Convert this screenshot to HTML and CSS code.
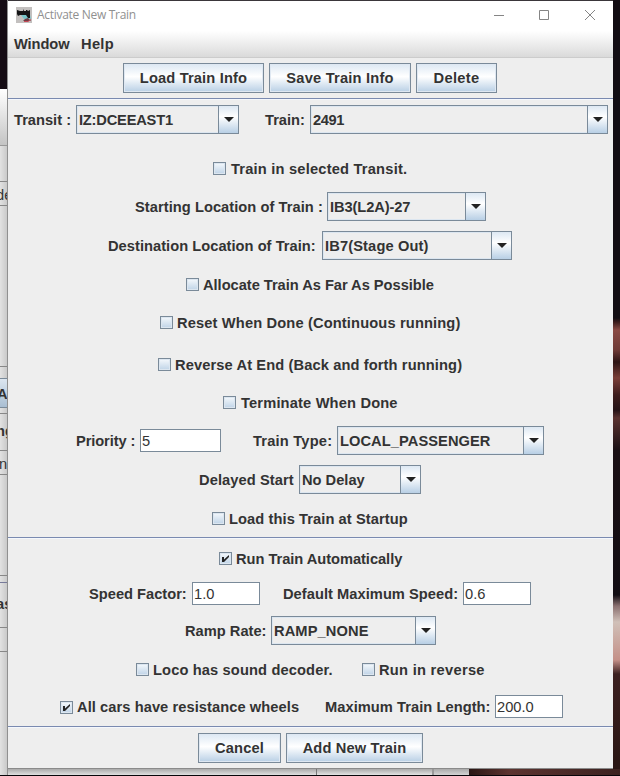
FILE: index.html
```
<!DOCTYPE html>
<html lang="en">
<head>
<meta charset="utf-8">
<title>Activate New Train</title>
<link rel="stylesheet" href="styles.css">
</head>
<body>
<div class="desktop">
  <div class="behind-left">
    <div class="bl bl-dark"></div>
    <div class="bl bl-head"></div>
    <div class="bl bl-a"></div>
    <div class="bl bl-field">de</div>
    <div class="bl bl-b"></div>
    <div class="bl bl-gap"></div>
    <div class="bl bl-button">A</div>
    <div class="bl bl-gap2"></div>
    <div class="bl bl-title">ng</div>
    <div class="bl bl-cell">n</div>
    <div class="bl bl-c"></div>
    <div class="bl bl-gap3"></div>
    <div class="bl bl-title2">as</div>
    <div class="bl bl-cell2"></div>
    <div class="bl bl-d"></div>
  </div>
  <main class="window">
    <header class="titlebar">
      <svg class="app-icon" width="16" height="16" viewBox="0 0 16 16">
        <rect width="16" height="16" fill="#c3c0bf"/>
        <path d="M5 8h9l1 4H8z" fill="#76c4c9"/>
        <path d="M1 3l3 1h3V2l1 2h2V3h1l1 1 2-1v8h-2l-2-3H4L2 9 1 7z" fill="#141416"/>
        <path d="M9 12l3-1 3 3H7z" fill="#6d3c45"/>
        <path d="M8 14.500h4l3-2" stroke="#c84a58" fill="none"/>
      </svg>
      <span class="caption">Activate New Train</span>
      <svg class="controls" width="104" height="12" viewBox="0 0 104 12" fill="none" stroke="#858585">
        <path d="M1 6.500h10M46.500 1.500h9v9h-9zM92 1l10 10M102 1L92 11"/>
      </svg>
    </header>
    <nav class="menubar"><span class="m-window">Window</span><span class="m-help">Help</span></nav>
    <div class="buttons top">
      <button class="w141">Load Train Info</button><button class="w142">Save Train Info</button><button class="w81">Delete</button>
    </div>
    <hr>
    <section>
      <div class="row r-transit"><label class="l-transit">Transit :</label><div class="combo c-transit"><span>IZ:DCEEAST1</span><i></i></div><label class="l-train">Train:</label><div class="combo c-train"><span>2491</span><i></i></div></div>
      <div class="row r-selected"><b class="check"></b><span class="t-selected">Train in selected Transit.</span></div>
      <div class="row r-start"><label class="l-start">Starting Location of Train :</label><div class="combo c-start"><span>IB3(L2A)-27</span><i></i></div></div>
      <div class="row r-dest"><label class="l-dest">Destination Location of Train:</label><div class="combo c-dest"><span>IB7(Stage Out)</span><i></i></div></div>
      <div class="row r-alloc"><b class="check"></b><span class="t-alloc">Allocate Train As Far As Possible</span></div>
      <div class="row r-reset"><b class="check"></b><span class="t-reset">Reset When Done (Continuous running)</span></div>
      <div class="row r-reverse"><b class="check"></b><span class="t-reverse">Reverse At End (Back and forth running)</span></div>
      <div class="row r-term"><b class="check"></b><span class="t-term">Terminate When Done</span></div>
      <div class="row r-priority"><label class="l-priority">Priority :</label><div class="field f-priority">5</div><label class="l-type">Train Type:</label><div class="combo c-type"><span>LOCAL_PASSENGER</span><i></i></div></div>
      <div class="row r-delay"><label class="l-delay">Delayed Start</label><div class="combo c-delay"><span>No Delay</span><i></i></div></div>
      <div class="row r-load"><b class="check"></b><span class="t-load">Load this Train at Startup</span></div>
    </section>
    <hr>
    <section>
      <div class="row r-auto"><b class="check on"><svg width="13" height="13" viewBox="0 0 13 13"><path d="M3 5h2v2.500L10 3v2L5 10H3z" fill="#222"/></svg></b><span class="t-auto">Run Train Automatically</span></div>
      <div class="row r-speed"><label class="l-speed">Speed Factor:</label><div class="field">1.0</div><label class="l-max">Default Maximum Speed:</label><div class="field">0.6</div></div>
      <div class="row r-ramp"><label class="l-ramp">Ramp Rate:</label><div class="combo c-ramp"><span>RAMP_NONE</span><i></i></div></div>
      <div class="row r-loco"><b class="check"></b><span class="t-loco">Loco has sound decoder.</span><b class="check"></b><span class="t-rev">Run in reverse</span></div>
      <div class="row r-wheels"><b class="check on"><svg width="13" height="13" viewBox="0 0 13 13"><path d="M3 5h2v2.500L10 3v2L5 10H3z" fill="#222"/></svg></b><span class="t-wheels">All cars have resistance wheels</span><label class="l-length">Maximum Train Length:</label><div class="field">200.0</div></div>
    </section>
    <hr>
    <div class="buttons bottom"><button class="w83">Cancel</button><button class="w137">Add New Train</button></div>
  </main>
  <div class="behind-right"></div>
  <div class="behind-bottom"><div class="bb1"></div><div class="bb2"></div><div class="bb3"></div><div class="bb4"></div></div>
</div>
</body>
</html>
```
FILE: styles.css
```
* { box-sizing: border-box; }
body { margin: 0; background: #0c080c; color: #333; font: bold 14.67px/17px "Liberation Sans", Arial, sans-serif; white-space: nowrap; }
.desktop { display: grid; grid-template-columns: 8px 605px 7px; grid-template-rows: 769px 6px; width: 620px; height: 776px; overflow: hidden; background: #08060a; }

.behind-left { grid-row: 1 / 3; overflow: hidden; display: flex; flex-direction: column; background: #dcdcdc; border-right: 1px solid #909090; }
.bl { flex: none; width: 8px; overflow: hidden; background: linear-gradient(90deg, #e2e2e2, #c6c6c6); }
.bl-dark { height: 89px; background: #150c14; }
.bl-head { height: 57px; background: linear-gradient(#fff, #c4c4c4); border-bottom: 1px solid #999; }
.bl-a { height: 35px; }
.bl-field { height: 25px; border: solid #888; border-width: 1px 0; font-weight: normal; line-height: 26px; text-indent: -4px; }
.bl-b { height: 161px; border-bottom: 1px solid #888; }
.bl-gap { height: 11px; }
.bl-button { height: 30px; border: solid #7a8a99; border-width: 1px 0; background: linear-gradient(#dce6f0, #a9bed2); line-height: 30px; text-indent: -3px; }
.bl-gap2 { height: 6px; border-bottom: 1px solid #888; }
.bl-title { height: 37px; border-bottom: 1px solid #888; line-height: 35px; text-indent: -4px; }
.bl-cell { height: 24px; border-bottom: 1px solid #888; line-height: 26px; font-weight: normal; text-indent: -1px; }
.bl-c { height: 101px; border-bottom: 1px solid #888; }
.bl-gap3 { height: 7px; border-bottom: 1px solid #777a99; }
.bl-title2 { height: 45px; border-bottom: 1px solid #888; line-height: 43px; text-indent: -4px; }
.bl-cell2 { height: 24px; border-bottom: 1px solid #888; }
.bl-d { height: 123px; }

.window { display: flex; flex-direction: column; background: #eee; border-top: 1px solid #3a363a; border-bottom: 1px solid #8a8a8a; overflow: hidden; }
.titlebar { height: 31px; background: #fff; display: flex; align-items: center; padding: 0 0 3px 8px; }
.app-icon { margin-right: 5px; }
.caption { font: 12px/16px "Open Sans", "Noto Sans", sans-serif; letter-spacing: -.3px; color: #909090; width: 456px; padding-top: 1px; }
.menubar { height: 27px; display: flex; align-items: center; padding: 1px 0 0 6px; background: linear-gradient(#fff, #dadada); border-bottom: 1px solid #ccc; }
.m-window { width: 67px; letter-spacing: -.1px; }
.m-help { letter-spacing: .3px; }

hr { margin: 0; border: 0; height: 2px; flex: none; background: linear-gradient(#7a8ab0 50%, #f4f7fc 50%); }
.buttons { display: flex; gap: 5px; height: 40px; align-items: center; flex: none; }
.top { padding-left: 115px; }
.bottom { padding-left: 190px; }
button { height: 30px; padding: 1px 0 0; border: 1px solid #7a8a99; background: linear-gradient(#dde8f3, #fff 45%, #b8cfe5); box-shadow: inset 0 0 0 1px #dfe8f2; font: inherit; color: inherit; text-align: center; letter-spacing: .15px; }
.w141 { width: 141px; } .w142 { width: 142px; letter-spacing: .2px; } .w81 { width: 81px; letter-spacing: .35px; } .w83 { width: 83px; } .w137 { width: 137px; }

.row { height: 29px; display: flex; align-items: center; flex: none; }
.row > label, .row > span { flex: none; padding-top: 2px; }
.check { width: 13px; height: 13px; flex: none; border: 1px solid #7a8a99; background: linear-gradient(#f5f9fc, #bfd3e7); margin-right: 4px; box-shadow: inset 0 0 0 1px #dce6f0; }
.check svg { display: block; margin: -1px; }
.combo { height: 29px; flex: none; display: flex; border: 1px solid #7a8a99; box-shadow: inset 0 0 0 1px #dce6f0; line-height: 28px; padding-left: 2px; }
.combo span { flex: 1; }
.combo i { width: 20px; border-left: 1px solid #7a8a99; background: linear-gradient(#dde8f3, #fff 40%, #b8cfe5); display: flex; align-items: center; justify-content: center; }
.combo i::after { content: ""; border: 5px solid transparent; border-top-color: #222; border-bottom: 0; }
.field { width: 68px; height: 23px; flex: none; border: 1px solid #7a8a99; background: #fff; font-weight: normal; line-height: 22px; padding-left: 1px; }

.r-transit { margin-top: 5px; padding-left: 6px; }
.l-transit { width: 62px; } .c-transit { width: 163px; margin-right: 26px; letter-spacing: -.2px; }
.l-train { width: 45px; } .c-train { width: 298px; letter-spacing: -.4px; }
.r-selected { margin-top: 20px; padding-left: 205px; }
.r-selected .check { margin-right: 5px; }
.t-selected { letter-spacing: .2px; }
.r-start { margin-top: 9px; padding-left: 127px; }
.l-start { width: 192px; letter-spacing: .05px; } .c-start { width: 159px; letter-spacing: -.1px; }
.r-dest { margin-top: 10px; padding-left: 100px; }
.l-dest { width: 214px; letter-spacing: .03px; } .c-dest { width: 190px; letter-spacing: .13px; }
.r-alloc { margin-top: 10px; padding-left: 178px; }
.t-alloc { letter-spacing: -.03px; }
.r-reset { margin-top: 9px; padding-left: 152px; }
.t-reset { letter-spacing: .14px; }
.r-reverse { margin-top: 13px; padding-left: 150px; }
.t-reverse { letter-spacing: .11px; }
.r-term { margin-top: 9px; padding-left: 215px; }
.r-term .check { margin-right: 5px; }
.t-term { letter-spacing: .16px; }
.r-priority { margin-top: 9px; padding-left: 68px; }
.l-priority { width: 64px; letter-spacing: -.1px; } .f-priority { width: 81px; margin-right: 32px; }
.l-type { width: 84px; letter-spacing: .2px; } .c-type { width: 207px; letter-spacing: .06px; }
.r-delay { margin-top: 10px; padding-left: 191px; }
.l-delay { width: 100px; letter-spacing: .08px; } .c-delay { width: 122px; }
.r-load { margin: 10px 0 4px; padding-left: 204px; }
.t-load { letter-spacing: .08px; }
.r-auto { margin-top: 5px; padding-left: 211px; }
.t-auto { letter-spacing: -.04px; }
.r-speed { margin-top: 6px; padding-left: 81px; }
.l-speed { width: 103px; } .l-max { width: 180px; margin-left: 23px; letter-spacing: .04px; }
.r-ramp { margin-top: 8px; padding-left: 177px; }
.l-ramp { width: 86px; } .c-ramp { width: 165px; letter-spacing: .1px; }
.r-loco { margin-top: 10px; padding-left: 128px; }
.t-loco { width: 209px; letter-spacing: .13px; }
.t-rev { letter-spacing: .28px; }
.r-wheels { margin: 8px 0 5px; padding-left: 52px; }
.r-wheels .check { position: relative; top: 1px; }
.t-wheels { width: 248px; letter-spacing: .07px; }
.l-length { width: 170px; letter-spacing: .05px; }

.behind-right { background: linear-gradient(#120d13 0 318px, #3a1c1c 322px, #8a4a44 330px, #6e3a36 350px, #2c1414 362px, #7a3e38 378px, #3c1c1c 395px, #241216 410px, #5a3230 418px, #1a1014 450px, #120d13 595px, #8a7070 606px, #d0c0b8 622px, #c49088 660px, #3c2020 674px, #2a1614 760px); }
.behind-bottom { grid-column: 2 / 4; display: flex; background: #dadada; }
.bb1 { width: 309px; border-right: 1px solid #777; background: linear-gradient(#aaa, #e0e0e0); }
.bb2 { width: 117px; border-right: 2px solid #999; background: linear-gradient(#aaa, #e4e4e4); }
.bb3 { width: 35px; background: linear-gradient(#aaa, #d4d4d4); }
.bb4 { flex: 1; background: linear-gradient(90deg, #2a1614, #5c3430 40px, #3c2220); }
```
